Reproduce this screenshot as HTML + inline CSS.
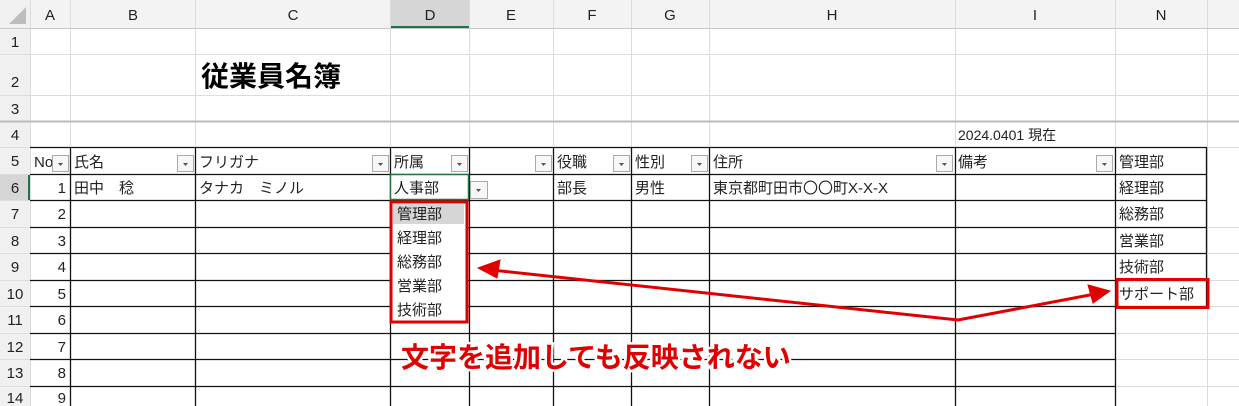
<!DOCTYPE html>
<html><head><meta charset="utf-8"><style>
html,body{margin:0;padding:0;background:#fff;width:1239px;height:406px;overflow:hidden}
svg{display:block}
text{font-family:"Liberation Sans","Noto Sans CJK JP",sans-serif;fill:#222}
</style></head><body>
<svg width="1239" height="406" xmlns="http://www.w3.org/2000/svg">
<rect x="0" y="0" width="1239" height="28" fill="#f3f3f3"/>
<rect x="0" y="0" width="30" height="406" fill="#f0f0f0"/>
<rect x="390" y="0" width="79" height="28" fill="#d6d6d6"/>
<rect x="390" y="26" width="79" height="2" fill="#217346"/>
<rect x="0" y="174" width="30" height="26" fill="#d6d6d6"/>
<rect x="28" y="174" width="2" height="26" fill="#217346"/>
<polygon points="9,24 26,24 26,7" fill="#bdbdbd"/>
<g stroke="#dcdcdc" stroke-width="1">
<line x1="30.5" y1="0" x2="30.5" y2="406"/><line x1="70.5" y1="0" x2="70.5" y2="406"/><line x1="195.5" y1="0" x2="195.5" y2="406"/><line x1="390.5" y1="0" x2="390.5" y2="406"/><line x1="469.5" y1="0" x2="469.5" y2="406"/><line x1="553.5" y1="0" x2="553.5" y2="406"/><line x1="631.5" y1="0" x2="631.5" y2="406"/><line x1="709.5" y1="0" x2="709.5" y2="406"/><line x1="955.5" y1="0" x2="955.5" y2="406"/><line x1="1115.5" y1="0" x2="1115.5" y2="406"/><line x1="1207.5" y1="0" x2="1207.5" y2="406"/>
<line x1="0" y1="28.5" x2="1239" y2="28.5" stroke="#c8c8c8"/><line x1="0" y1="54.5" x2="1239" y2="54.5"/><line x1="0" y1="95.5" x2="1239" y2="95.5"/><line x1="0" y1="121.5" x2="1239" y2="121.5" stroke="#bbb" stroke-width="2"/><line x1="0" y1="147.5" x2="1239" y2="147.5"/>
<line x1="0" y1="174.5" x2="30" y2="174.5"/><line x1="0" y1="200.5" x2="30" y2="200.5"/><line x1="0" y1="227.5" x2="1239" y2="227.5"/><line x1="0" y1="253.5" x2="1239" y2="253.5"/><line x1="0" y1="280.5" x2="1239" y2="280.5"/><line x1="0" y1="306.5" x2="1239" y2="306.5"/><line x1="0" y1="333.5" x2="1239" y2="333.5"/><line x1="0" y1="359.5" x2="1239" y2="359.5"/><line x1="0" y1="386.5" x2="1239" y2="386.5"/>
</g>
<g stroke="#111" stroke-width="1.3">
<line x1="30" y1="147.5" x2="1207" y2="147.5"/>
<line x1="30" y1="174.5" x2="1207" y2="174.5"/>
<line x1="30" y1="200.5" x2="1207" y2="200.5"/>
<line x1="30" y1="227.5" x2="1207" y2="227.5"/><line x1="30" y1="253.5" x2="1207" y2="253.5"/><line x1="30" y1="280.5" x2="1207" y2="280.5"/><line x1="30" y1="306.5" x2="1207" y2="306.5"/>
<line x1="30" y1="333.5" x2="1115" y2="333.5"/><line x1="30" y1="359.5" x2="1115" y2="359.5"/><line x1="30" y1="386.5" x2="1115" y2="386.5"/>
<line x1="70.5" y1="147" x2="70.5" y2="406"/><line x1="195.5" y1="147" x2="195.5" y2="406"/><line x1="390.5" y1="147" x2="390.5" y2="406"/><line x1="469.5" y1="147" x2="469.5" y2="406"/><line x1="553.5" y1="147" x2="553.5" y2="406"/><line x1="631.5" y1="147" x2="631.5" y2="406"/><line x1="709.5" y1="147" x2="709.5" y2="406"/><line x1="955.5" y1="147" x2="955.5" y2="406"/><line x1="1115.5" y1="147" x2="1115.5" y2="406"/><line x1="1206.5" y1="147" x2="1206.5" y2="307"/>
</g>
<rect x="390.5" y="174.5" width="78" height="25" fill="#fff" stroke="#217346" stroke-width="1.5"/>
<g font-size="15" text-anchor="middle" style="fill:#444">
<text x="50" y="20">A</text><text x="133" y="20">B</text><text x="293" y="20">C</text><text x="430" y="20">D</text><text x="511" y="20">E</text><text x="592" y="20">F</text><text x="670" y="20">G</text><text x="832" y="20">H</text><text x="1035" y="20">I</text><text x="1161" y="20">N</text>
</g>
<g font-size="15" text-anchor="middle" style="fill:#444">
<text x="15" y="47">1</text><text x="15" y="87">2</text><text x="15" y="114">3</text><text x="15" y="140">4</text><text x="15" y="166">5</text><text x="15" y="193">6</text><text x="15" y="219">7</text><text x="15" y="246">8</text><text x="15" y="272">9</text><text x="15" y="299">10</text><text x="15" y="325">11</text><text x="15" y="352">12</text><text x="15" y="378">13</text><text x="15" y="403">14</text>
</g>
<text x="201" y="86" font-size="28" font-weight="bold" style="fill:#000">従業員名簿</text>
<text x="958" y="140" font-size="14">2024.0401 現在</text>
<g font-size="15">
<text x="34" y="167">No</text><text x="74" y="167">氏名</text><text x="199" y="167">フリガナ</text><text x="394" y="167">所属</text><text x="557" y="167">役職</text><text x="635" y="167">性別</text><text x="713" y="167">住所</text><text x="958" y="167">備考</text><text x="1119" y="167">管理部</text>
</g>
<g fill="#f7f7f7" stroke="#aaa">
<rect x="52.5" y="155.5" width="16" height="16"/><rect x="177.5" y="155.5" width="16" height="16"/><rect x="372.5" y="155.5" width="16" height="16"/><rect x="451.5" y="155.5" width="16" height="16"/><rect x="535.5" y="155.5" width="16" height="16"/><rect x="613.5" y="155.5" width="16" height="16"/><rect x="691.5" y="155.5" width="16" height="16"/><rect x="936.5" y="155.5" width="16" height="16"/><rect x="1096.5" y="155.5" width="16" height="16"/><rect x="470.5" y="181.5" width="17" height="17"/>
</g>
<g fill="#555">
<polygon points="58,163 63,163 60.5,166"/><polygon points="183,163 188,163 185.5,166"/><polygon points="378,163 383,163 380.5,166"/><polygon points="457,163 462,163 459.5,166"/><polygon points="541,163 546,163 543.5,166"/><polygon points="619,163 624,163 621.5,166"/><polygon points="697,163 702,163 699.5,166"/><polygon points="942,163 947,163 944.5,166"/><polygon points="1102,163 1107,163 1104.5,166"/><polygon points="476,189 481,189 478.5,192"/>
</g>
<g font-size="15">
<text x="66" y="193" text-anchor="end">1</text><text x="74" y="193">田中　稔</text><text x="199" y="193">タナカ　ミノル</text><text x="394" y="193">人事部</text><text x="557" y="193">部長</text><text x="635" y="193">男性</text><text x="713" y="193">東京都町田市〇〇町X-X-X</text><text x="1119" y="193">経理部</text>
</g>
<g font-size="15" text-anchor="end">
<text x="66" y="219">2</text><text x="66" y="246">3</text><text x="66" y="272">4</text><text x="66" y="299">5</text><text x="66" y="325">6</text><text x="66" y="352">7</text><text x="66" y="378">8</text><text x="66" y="403">9</text>
</g>
<g font-size="15">
<text x="1119" y="219">総務部</text><text x="1119" y="246">営業部</text><text x="1119" y="272">技術部</text><text x="1119" y="299">サポート部</text>
</g>
<rect x="391" y="202" width="76" height="120" fill="#fff"/>
<rect x="393" y="204" width="71" height="20" fill="#d6d6d6"/>
<g font-size="15">
<text x="397" y="219">管理部</text><text x="397" y="243">経理部</text><text x="397" y="267">総務部</text><text x="397" y="291">営業部</text><text x="397" y="315">技術部</text>
</g>
<rect x="391" y="202" width="76" height="120" fill="none" stroke="#e00000" stroke-width="3"/>
<rect x="1117" y="279.5" width="91" height="28" fill="none" stroke="#e00000" stroke-width="3"/>
<g fill="#e00000" stroke="#e00000">
<polyline points="492,270 958,320 1095,294" fill="none" stroke-width="3"/>
<polygon points="478,268 500,260 497,278" stroke-width="1"/>
<polygon points="1110,291 1088,285 1093,303" stroke-width="1"/>
</g>
<text x="401" y="367" font-size="28" font-weight="bold" stroke="#fff" stroke-width="5" paint-order="stroke" style="fill:#e00000">文字を追加しても反映されない</text>
</svg>
</body></html>
